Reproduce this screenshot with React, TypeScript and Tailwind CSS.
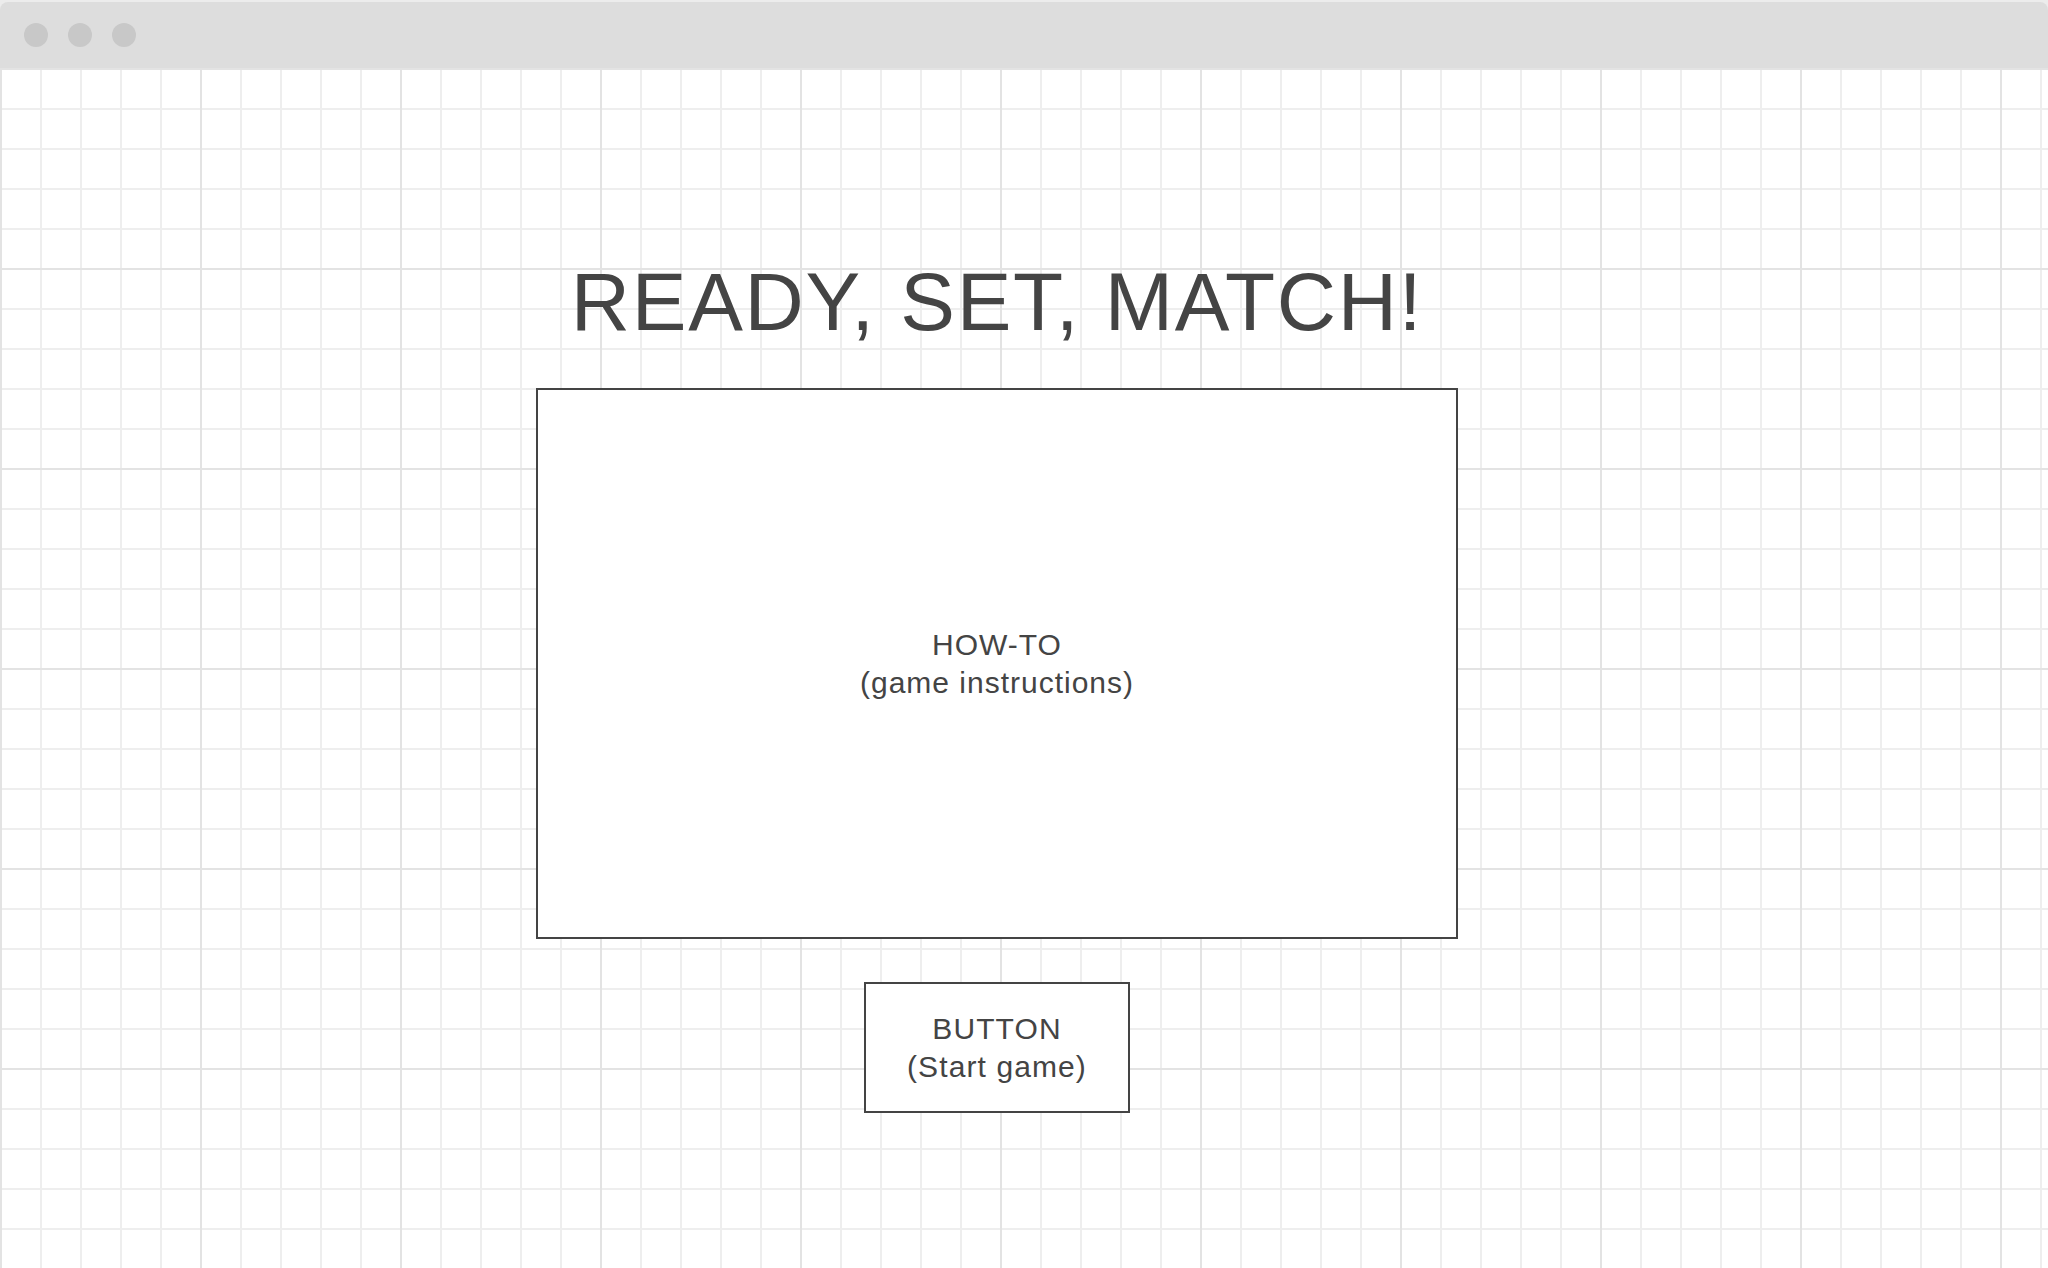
import React from 'react';

const font = "font-['Liberation_Sans',Arial,sans-serif]";

const WindowBar: React.FC = () => (
  <div className="bg-[#ececec] pt-[2px]">
    <div className="flex h-[66px] items-center gap-5 rounded-t-[8px] bg-[#dddddd] pl-6">
      <span className="h-6 w-6 rounded-full bg-[#c8c8c8]" />
      <span className="h-6 w-6 rounded-full bg-[#c8c8c8]" />
      <span className="h-6 w-6 rounded-full bg-[#c8c8c8]" />
    </div>
  </div>
);

const App: React.FC = () => {
  return (
    <div className={`flex h-screen flex-col overflow-hidden bg-white ${font}`}>
      <WindowBar />

      <main className="flex flex-1 flex-col items-center bg-[linear-gradient(to_right,#e3e3e3_2px,transparent_2px),linear-gradient(to_bottom,#e3e3e3_2px,transparent_2px),linear-gradient(to_right,#eeeeee_2px,transparent_2px),linear-gradient(to_bottom,#eeeeee_2px,transparent_2px)] bg-size-[200px_200px,200px_200px,40px_40px,40px_40px] pr-[54px] pt-[193px]">
        <h1 className="text-[82px] leading-[82px] tracking-[1.7px] text-[#444444]">READY, SET, MATCH!</h1>

        <section className="mt-[45px] flex h-[551px] w-[922px] items-center justify-center border-2 border-[#444444] bg-white text-center text-[30px] leading-[38px] tracking-[1px] text-[#444444]">
          <p>
            HOW-TO
            <br />
            (game instructions)
          </p>
        </section>

        <button className="mt-[43px] flex h-[131px] w-[266px] items-center justify-center border-2 border-[#444444] bg-white text-center text-[30px] leading-[38px] tracking-[1.1px] text-[#444444]">
          <span>
            BUTTON
            <br />
            (Start game)
          </span>
        </button>
      </main>
    </div>
  );
};

export default App;
